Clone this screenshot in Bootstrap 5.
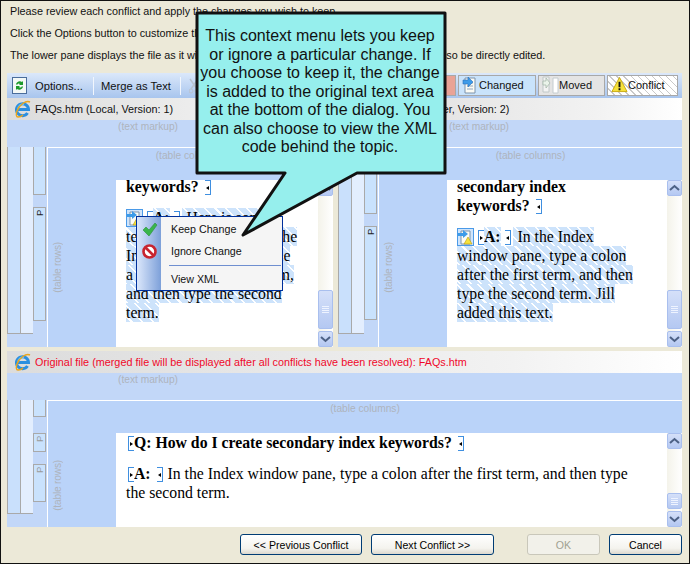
<!DOCTYPE html>
<html lang="en">
<head>
<meta charset="utf-8">
<title>Merge conflict</title>
<link href="https://cdn.jsdelivr.net/npm/bootstrap@5.3.0/dist/css/bootstrap.min.css" rel="stylesheet">
<style>
html,body{margin:0;padding:0;width:690px;height:564px;overflow:hidden;background:#ece9d8}
.dlg{position:relative;width:690px;height:564px;background:#ece9d8;box-shadow:inset 0 0 0 1px #111;padding:0 8px 0 7px;font:10.8px/14px "Liberation Sans",Arial,sans-serif;color:#111;overflow:hidden}
.intro{height:73px;margin-left:3px;padding-top:1px}
.intro div{height:22px;line-height:20px;white-space:nowrap;font-size:10.8px}
.tbar{height:25px;background:linear-gradient(#dbe8fa,#a8c5ee);gap:0;padding:0 4px 0 5px;font-size:11.2px}
.tb-txt{padding:0 10px 0 8px;border-right:1px solid #f1f6fd;line-height:18px}
.tb-txt2{padding:0 9px 0 7px}
.tb-tog{height:21px;border:1px solid #a8a8a8;line-height:19px;padding:0 0 0 3px;margin-left:2px;font-size:11px}
.t-red{width:26px;background:#e9a396;margin-left:0}
.t-chg{width:78px;background:#c9e3fb;gap:2px}
.t-mov{width:67px;background:#e4e4e4;gap:0}
.t-con{width:71px;gap:0;background:repeating-linear-gradient(45deg,#fff 0 4px,#c9c9c9 4px 5px)}
.hd{height:22px;background:linear-gradient(90deg,#dcdcdc,#f2f2f2 75%,#fff);padding-left:8px;gap:4px;font-size:10.8px;white-space:nowrap}
.w-l{width:331px}.w-r{width:344px}
.mark{height:27px;background:#c2d7f8;padding:0 0 0 111px;color:#aeb4bd;font-size:10.2px;line-height:14px}
.pane{height:200px}
.pane-low{height:127px}
.p-l{width:326px}.p-r{width:344px}.p-f{width:675px}
.rul{width:40px;background:#c2d7f8;flex:none}
.rc{border-left:1px solid #a9a9a9;flex:none;box-sizing:content-box;border-bottom:1px solid #a9a9a9}
.rc1{background:#c9e0fc;width:12px}
.rc2{background:#e3eefe;width:12px}
.h186{height:186px}.h113{height:113px}
.rc3{width:13px;flex:none}
.cell{border:1px solid #a9a9a9;border-top:0;background:#c9e2fd;font-size:9.5px;line-height:11px;color:#222;box-sizing:border-box}
.cell span{display:block;writing-mode:vertical-rl;transform:rotate(180deg);margin:2px auto 0;height:14px;width:11px;text-align:right}
.grey{color:#9a9a9a}
.c47{height:48px}.c94{height:94px;border-top:1px solid #a9a9a9}.c113{height:114px;border-top:1px solid #a9a9a9}
.c67{height:67px}
.g13{height:12px}
.c17{height:17px}.c18{height:19px;border-top:1px solid #a9a9a9}.c37{height:38px;border-top:1px solid #a9a9a9}.g16{height:16px}
.mainp{border-left:1px solid #fff;border-top:1px solid #fff;min-width:0}
.colb{height:32px;background:#bad3f9;text-align:center;color:#aeb4bd;font-size:10.2px;line-height:14px;padding-top:1px}
.rowb{width:68px;flex:none;background:#bad3f9;color:#aeb4bd;font-size:10.2px;padding-left:4px}
.rowb span{writing-mode:vertical-rl;transform:rotate(180deg);line-height:11px;margin-top:62px;letter-spacing:-.2px}
.rowb-low span{margin-top:27px}
.doc{flex:1;background:#fff;min-width:0;overflow:hidden;padding-left:10px;font:15.75px/19px "Liberation Serif","Times New Roman",serif;color:#000}
.doc p{margin:0 0 12px;white-space:nowrap}
.clip{margin-top:-3px}
.chg{background:repeating-linear-gradient(45deg,#cde3fb 0 6px,#fff 6px 7.5px);padding:1px 0}
.mo,.mc{display:inline-block;width:6px;height:15px;border:1px solid #3f8fe0;position:relative;background:#fff;vertical-align:1px;margin-block:-4px}
.mo{border-right:0}.mc{border-left:0;margin-right:5px;margin-left:2px}
.mc-t{margin-right:2px;margin-left:0}
.mo-i{margin-left:2px}
.chg-i{padding-left:5px}
.mo::after,.mc::after{content:"";position:absolute;top:5px;border:2px solid transparent}
.mo::after{left:1px;border-left:3px solid #000;border-right:0}
.mc::after{right:1px;border-right:3px solid #000;border-left:0}
.chgico{display:inline-block;width:17px;height:18px;border:1px solid #4a9ae8;background:#cfe4fb;overflow:hidden;vertical-align:1px;margin-block:-5px;margin-right:4px;line-height:0}
.sb{width:15px;flex:none;background:linear-gradient(90deg,#f4f3ea,#fff)}
.sbb{height:16px;background:linear-gradient(#d5e0f9,#b4c8f2);border:1px solid #a9bfee;border-radius:2px;line-height:0;flex:none;box-sizing:border-box}
.thumb{height:39px;margin-bottom:2px}
.thumb-s{height:16px;margin-bottom:2px}
.foot{padding-top:7px;height:37px}
.xpb{height:21px;padding:0;font:10.6px/18px "Liberation Sans",Arial,sans-serif;color:#000;border:1px solid #003c74;border-radius:3px;background:linear-gradient(#fff,#f4f3ee 70%,#dcd8ce);flex:none}
.xb-prev{width:122px}.xb-next{width:123px;margin-left:9px}.xb-ok{width:73px;margin-left:33px}.xb-can{width:73px;margin-left:9px}
.xpb:disabled{border-color:#c9c7ba;color:#a1a192;background:#f2f1ea;opacity:1}
.ctx{position:absolute;left:136px;top:216px;width:147px;height:75px;background:#f5f5f5;border:1px solid #00309c;font-size:10.7px;z-index:5}
.gut{width:24px;background:linear-gradient(90deg,#dbe7fb,#7da0d9);flex:none}
.mi{height:22px;line-height:22px;padding-left:10px}
.mi-t{margin-top:1px}
.msep{border-top:1px solid #6f8fd0;margin:3px 1px 2px 8px}
.ballon{position:absolute;left:190px;top:8px;width:262px;height:232px;z-index:9}
.ballon svg{position:absolute;left:0;top:0}
.btxt{position:relative;width:250px;margin:8px 0 0 5px;text-align:center;font:16px/18.5px "Liberation Sans",Arial,sans-serif;color:#111;padding-top:11px}
.ie{flex:none}
.red{color:#f0082a;letter-spacing:.01px}
.gic{position:absolute;left:5px}
.gic-a{top:5px}.gic-b{top:27px}
</style>
</head>
<body>
<div class="dlg">
  <div class="intro">
    <div>Please review each conflict and apply the changes you wish to keep.</div>
    <div>Click the Options button to customize the way changes are displayed.</div>
    <div>The lower pane displays the file as it will appear after the merge, and this lower pane can also be directly edited.</div>
  </div>

  <div class="tbar d-flex align-items-center">
    <svg width="15" height="17" viewBox="0 0 15 17"><rect x=".5" y=".5" width="14" height="16" fill="#f3f8f6" stroke="#4a6d9c"/><path d="M4 7a4 4 0 0 1 6-2l1-1v4H7l1-1a2 2 0 0 0-3 1z" fill="#1c9a2b"/><path d="M11 10a4 4 0 0 1-6 2l-1 1V9h4l-1 1a2 2 0 0 0 3-1z" fill="#1c9a2b"/></svg>
    <span class="tb-txt">Options...</span>
    <span class="tb-txt tb-txt2">Merge as Text</span>
    <svg width="10" height="16" viewBox="0 0 10 16" class="ms-2"><path d="M1 1l7 10M9 1L2 11" stroke="#b9c2cf" stroke-width="1.5" fill="none"/><circle cx="2" cy="13" r="2" fill="none" stroke="#b9c2cf"/><circle cx="8" cy="13" r="2" fill="none" stroke="#b9c2cf"/></svg>
    <div class="ms-auto d-flex">
      <div class="tb-tog t-red"></div>
      <div class="tb-tog t-chg d-flex">
        <svg width="15" height="18" viewBox="0 0 15 18"><path d="M3 2h10v15H3z" fill="#fbfbf4" stroke="#7c93ad"/><path d="M5 7h6M5 10h6M5 13h6" stroke="#8fa6bd"/><path d="M1 4h5V1l5 5-5 5V8H1z" fill="#3d9be9" stroke="#2b6fb8" stroke-width=".6"/></svg>
        <span>Changed</span>
      </div>
      <div class="tb-tog t-mov d-flex">
        <svg width="17" height="18" viewBox="0 0 17 18"><path d="M1 1h6v15H1z" fill="#f3f3f3" stroke="#c0c8c8"/><path d="M1 5h3V2l4 5-4 5V9H1z" fill="#eaf3ea" stroke="#9fb2a4" stroke-width=".7"/><path d="M11 2h5v15h-5z" fill="#fff" stroke="#c4ccd0"/></svg>
        <span>Moved</span>
      </div>
      <div class="tb-tog t-con d-flex">
        <svg width="17" height="17" viewBox="0 0 18 17"><path d="M9 1l8 15H1z" fill="#f6e23c" stroke="#c9a90f"/><path d="M8 5.500h2v6H8zM8 12.500h2v2H8z" fill="#111"/></svg>
        <span>Conflict</span>
      </div>
    </div>
  </div>

  <div class="d-flex">
    <div class="hd w-l d-flex align-items-center">
      <svg class="ie" width="16" height="18" viewBox="0 0 16 18"><path d="M2 9.500h11.500a6 6 0 1 0-1 3.500" fill="none" stroke="#2b8fe0" stroke-width="3"/><path d="M3 9a6 6 0 0 1 6-5" fill="none" stroke="#66bdf5" stroke-width="2"/><path d="M15 2c-4-2-11 3-13 9-1 3-1 6 1 6s4-1 5-2" fill="none" stroke="#e9a51d" stroke-width="1.400"/></svg>
      <span>FAQs.htm (Local, Version: 1)</span>
    </div>
    <div class="hd w-r d-flex align-items-center">
      <svg class="ie" width="16" height="18" viewBox="0 0 16 18"><path d="M2 9.500h11.500a6 6 0 1 0-1 3.500" fill="none" stroke="#2b8fe0" stroke-width="3"/></svg>
      <span>FAQs.htm (Server, Version: 2)</span>
    </div>
  </div>
  <div class="d-flex">
    <div class="mark w-l">(text markup)</div>
    <div class="mark w-r">(text markup)</div>
  </div>

  <div class="d-flex justify-content-between">
    <div class="pane p-l d-flex">
      <div class="rul d-flex">
        <div class="rc rc1 h186"></div>
        <div class="rc rc2 h186"></div>
        <div class="rc3">
          <div class="cell c47"></div>
          <div class="g13"></div>
          <div class="cell c113"><span>P</span></div>
        </div>
      </div>
      <div class="mainp flex-grow-1 d-flex flex-column">
        <div class="colb">(table columns)</div>
        <div class="d-flex flex-grow-1 overflow-hidden">
          <div class="rowb"><span>(table rows)</span></div>
          <div class="doc">
            <div class="clip">
              <p><b>keywords?</b> <i class="mc"></i></p>
              <p><span class="chgico"><svg width="15" height="16" viewBox="0 0 15 16"><path d="M3 2h9v13H3z" fill="#fbfbf4" stroke="#7c93ad"/><path d="M0 4h5V1l5 4-5 4V7H0z" fill="#3d9be9"/><path d="M10 8l4 7H6z" fill="#f6e23c" stroke="#b89a0f" stroke-width=".6"/></svg></span><i class="mo"></i><span class="chg"><b>A:</b></span> <i class="mc mc-t"></i><span class="chg chg-i">Here is some<br>text I have added here. The<br>In the Index window pane<br>a colon after the first term,<br>and then type the second<br>term.</span></p>
            </div>
          </div>
          <div class="sb d-flex flex-column">
            <div class="sbb"><svg width="13" height="14" viewBox="0 0 13 14"><path d="M2 9l4.500-4 4.500 4" fill="none" stroke="#4d6185" stroke-width="2"/></svg></div>
            <div class="flex-grow-1"></div>
            <div class="sbb thumb d-flex align-items-center justify-content-center"><svg width="7" height="7" viewBox="0 0 7 7"><path d="M0 .5h7M0 2.500h7M0 4.500h7M0 6.500h7" stroke="#eef3ff"/></svg></div>
            <div class="sbb"><svg width="13" height="14" viewBox="0 0 13 14"><path d="M2 5l4.500 4 4.500-4" fill="none" stroke="#4d6185" stroke-width="2"/></svg></div>
          </div>
        </div>
      </div>
    </div>

    <div class="pane p-r d-flex">
      <div class="rul d-flex">
        <div class="rc rc1 h186"></div>
        <div class="rc rc2 h186"></div>
        <div class="rc3">
          <div class="cell c67"></div>
          <div class="g13"></div>
          <div class="cell c94"><span>P</span></div>
        </div>
      </div>
      <div class="mainp flex-grow-1 d-flex flex-column">
        <div class="colb">(table columns)</div>
        <div class="d-flex flex-grow-1 overflow-hidden">
          <div class="rowb"><span>(table rows)</span></div>
          <div class="doc">
            <div class="clip">
              <p><b>secondary index<br>keywords?</b> <i class="mc"></i></p>
              <p><span class="chgico"><svg width="15" height="16" viewBox="0 0 15 16"><path d="M3 2h9v13H3z" fill="#fbfbf4" stroke="#7c93ad"/><path d="M0 4h5V1l5 4-5 4V7H0z" fill="#3d9be9"/><path d="M10 8l4 7H6z" fill="#f6e23c" stroke="#b89a0f" stroke-width=".6"/></svg></span><i class="mo"></i><span class="chg"><b>A:</b></span> <i class="mc mc-t"></i><span class="chg chg-i">In the Index<br>window pane, type a colon<br>after the first term, and then<br>type the second term. Jill<br>added this text.</span></p>
            </div>
          </div>
          <div class="sb d-flex flex-column">
            <div class="sbb"><svg width="13" height="14" viewBox="0 0 13 14"><path d="M2 9l4.500-4 4.500 4" fill="none" stroke="#4d6185" stroke-width="2"/></svg></div>
            <div class="flex-grow-1"></div>
            <div class="sbb thumb d-flex align-items-center justify-content-center"><svg width="7" height="7" viewBox="0 0 7 7"><path d="M0 .5h7M0 2.500h7M0 4.500h7M0 6.500h7" stroke="#eef3ff"/></svg></div>
            <div class="sbb"><svg width="13" height="14" viewBox="0 0 13 14"><path d="M2 5l4.500 4 4.500-4" fill="none" stroke="#4d6185" stroke-width="2"/></svg></div>
          </div>
        </div>
      </div>
    </div>
  </div>

  <div class="hd red d-flex align-items-center mt-1">
    <svg class="ie" width="16" height="18" viewBox="0 0 16 18"><path d="M2 9.500h11.500a6 6 0 1 0-1 3.500" fill="none" stroke="#2b8fe0" stroke-width="3"/><path d="M3 9a6 6 0 0 1 6-5" fill="none" stroke="#66bdf5" stroke-width="2"/><path d="M15 2c-4-2-11 3-13 9-1 3-1 6 1 6s4-1 5-2" fill="none" stroke="#e9a51d" stroke-width="1.400"/></svg>
    <span>Original file (merged file will be displayed after all conflicts have been resolved): FAQs.htm</span>
  </div>
  <div class="mark">(text markup)</div>

  <div class="pane-low p-f d-flex">
    <div class="rul d-flex">
      <div class="rc rc1 h113"></div>
      <div class="rc rc2 h113"></div>
      <div class="rc3">
        <div class="cell c17"></div>
        <div class="g16"></div>
        <div class="cell c18"><span class="grey">P</span></div>
        <div class="g13"></div>
        <div class="cell c37"><span class="grey">P</span></div>
      </div>
    </div>
    <div class="mainp flex-grow-1 d-flex flex-column">
      <div class="colb">(table columns)</div>
      <div class="d-flex flex-grow-1 overflow-hidden">
        <div class="rowb rowb-low"><span>(table rows)</span></div>
        <div class="doc">
          <p><i class="mo mo-i"></i><b>Q: How do I create secondary index keywords?</b> <i class="mc"></i></p>
          <p><i class="mo mo-i"></i><b>A:</b> <i class="mc"></i>In the Index window pane, type a colon after the first term, and then type<br>the second term.</p>
        </div>
        <div class="sb d-flex flex-column">
          <div class="sbb"><svg width="13" height="14" viewBox="0 0 13 14"><path d="M2 9l4.500-4 4.500 4" fill="none" stroke="#4d6185" stroke-width="2"/></svg></div>
          <div class="flex-grow-1"></div>
          <div class="sbb thumb-s d-flex align-items-center justify-content-center"><svg width="7" height="7" viewBox="0 0 7 7"><path d="M0 .5h7M0 2.500h7M0 4.500h7M0 6.500h7" stroke="#eef3ff"/></svg></div>
          <div class="sbb"><svg width="13" height="14" viewBox="0 0 13 14"><path d="M2 5l4.500 4 4.500-4" fill="none" stroke="#4d6185" stroke-width="2"/></svg></div>
        </div>
      </div>
    </div>
  </div>

  <div class="foot d-flex justify-content-end">
    <button class="btn xpb xb-prev" type="button">&lt;&lt; Previous Conflict</button>
    <button class="btn xpb xb-next" type="button">Next Conflict &gt;&gt;</button>
    <button class="btn xpb xb-ok" type="button" disabled>OK</button>
    <button class="btn xpb xb-can" type="button">Cancel</button>
  </div>

  <div class="ctx d-flex">
    <div class="gut position-relative">
      <svg class="gic gic-a" width="16" height="15" viewBox="0 0 16 15"><path d="M1 8l3-3 3 3 6-7 2 2-8 11z" fill="#39b54a" stroke="#2a8f3a" stroke-width=".6"/></svg>
      <svg class="gic gic-b" width="15" height="15" viewBox="0 0 15 15"><circle cx="7.500" cy="7.500" r="6" fill="#fff" stroke="#c8242f" stroke-width="2.600"/><path d="M3.500 3.500l8 8" stroke="#c8242f" stroke-width="2.600"/></svg>
    </div>
    <div class="flex-grow-1">
      <div class="mi mi-t">Keep Change</div>
      <div class="mi">Ignore Change</div>
      <div class="msep"></div>
      <div class="mi">View XML</div>
    </div>
  </div>

  <div class="ballon">
    <svg width="262" height="232" viewBox="0 0 262 232"><path d="M7 5H255V165H167L53 227L95 165H7Z" fill="#96efed" stroke="#111" stroke-width="3" stroke-linejoin="round"/></svg>
    <div class="btxt">This context menu lets you keep<br>or ignore a particular change. If<br>you choose to keep it, the change<br>is added to the original text area<br>at the bottom of the dialog. You<br>can also choose to view the XML<br>code behind the topic.</div>
  </div>
</div>
<script src="https://cdn.jsdelivr.net/npm/bootstrap@5.3.0/dist/js/bootstrap.bundle.min.js"></script>
</body>
</html>
